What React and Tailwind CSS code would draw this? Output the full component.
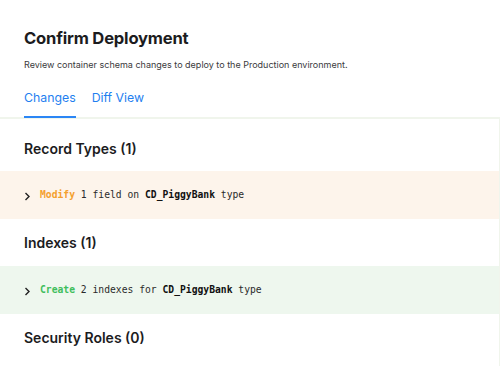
import React from "react";

function ChangeRow({ verb, verbClass, rest, name, bg }) {
    return (
        <div className={`flex items-center h-[48px] pl-[24px] ${bg}`}>
            <svg width="7" height="9" viewBox="0 0 7 9" className="mr-[9px] mt-[2px]">
                <path d="M1.5 1 L5 4.5 L1.5 8" fill="none" stroke="#222" strokeWidth="1.4" />
            </svg>
            <span className="font-['DejaVu_Sans_Mono',monospace] text-[9.7px] text-[#2a2a2a] whitespace-pre">
                <span className={`font-bold ${verbClass}`}>{verb}</span>
                {" " + rest + " "}
                <span className="font-bold text-[#111]">{name}</span>
                {" type"}
            </span>
        </div>
    );
}

export default function App() {
    return (
        <div className="w-[504px] h-[366px] bg-white overflow-hidden font-['Inter',sans-serif] text-[#1c1c1e]">
            {/* Header */}
            <div className="pl-[24px] pt-[27px]">
                <h1 className="text-[16.6px] font-bold leading-[22px] tracking-[-0.2px]">
                    Confirm Deployment
                </h1>
                <p className="mt-[10px] text-[9px] leading-[12px] text-[#3a3a3c]">
                    Review container schema changes to deploy to the Production environment.
                </p>
                <div className="flex gap-[16px] mt-[19px] text-[12.3px] text-[#1f7ff0]">
                    <div className="flex flex-col">
                        <span className="leading-[16px]">Changes</span>
                        <span className="relative z-10 mt-[10px] h-[2px] bg-[#2b86f5]"></span>
                    </div>
                    <span className="leading-[16px]">Diff View</span>
                </div>
            </div>

            {/* Content */}
            <div className="-mt-[1px] w-[500px] border-t-2 border-r border-[#f0f5ec] h-[260px]">
                <h2 className="pl-[24px] pt-[21px] h-[52px] text-[14px] font-semibold leading-[18px]">
                    Record Types (1)
                </h2>
                <ChangeRow
                    verb="Modify"
                    verbClass="text-[#f4a02e]"
                    rest="1 field on"
                    name="CD_PiggyBank"
                    bg="bg-[#fdf4eb]"
                />
                <h2 className="pl-[24px] pt-[15px] h-[47px] text-[14px] font-semibold leading-[18px]">
                    Indexes (1)
                </h2>
                <ChangeRow
                    verb="Create"
                    verbClass="text-[#3fbe5c]"
                    rest="2 indexes for"
                    name="CD_PiggyBank"
                    bg="bg-[#eef7ee]"
                />
                <h2 className="pl-[24px] pt-[15px] text-[14px] font-semibold leading-[18px]">
                    Security Roles (0)
                </h2>
            </div>
        </div>
    );
}
